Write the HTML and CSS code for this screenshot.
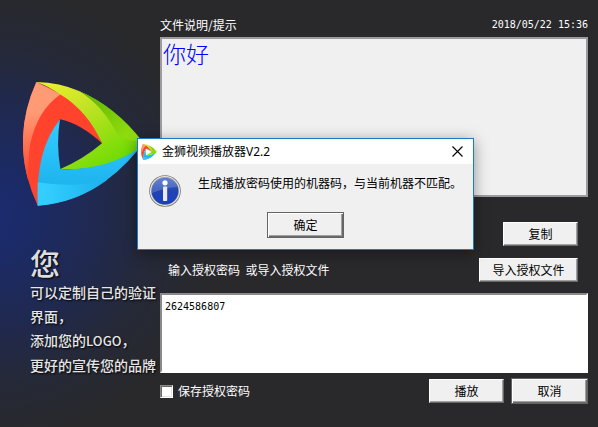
FILE: index.html
```html
<!DOCTYPE html>
<html lang="zh-CN">
<head>
    <meta charset="UTF-8">
    <meta name="viewport" content="width=device-width, initial-scale=1.0">
    <title>金狮视频播放器V2.2</title>
    <link rel="stylesheet" href="styles.css">
</head>
<body>
    <svg class="defs" width="0" height="0" aria-hidden="true">
        <defs>
            <linearGradient id="redLight" x1="0" y1="0" x2="0" y2="1">
                <stop offset="0.3" stop-color="#ff9b74"/>
                <stop offset="1" stop-color="#ff432d"/>
            </linearGradient>
            <linearGradient id="lime" x1="0" y1="0" x2="0.7" y2="1">
                <stop offset="0" stop-color="#eef22c"/>
                <stop offset="0.4" stop-color="#c4e326"/>
                <stop offset="1" stop-color="#6bdb00"/>
            </linearGradient>
            <linearGradient id="green" x1="0" y1="0" x2="0.8" y2="1">
                <stop offset="0" stop-color="#5cb300"/>
                <stop offset="1" stop-color="#94e010"/>
            </linearGradient>
            <linearGradient id="blue" x1="0" y1="0" x2="0" y2="1">
                <stop offset="0" stop-color="#33ccff"/>
                <stop offset="1" stop-color="#17adea"/>
            </linearGradient>
            <linearGradient id="blueLight" x1="0" y1="0" x2="1" y2="0">
                <stop offset="0.1" stop-color="#33ceff"/>
                <stop offset="1" stop-color="#1bb0ec"/>
            </linearGradient>
            <linearGradient id="infoFill" x1="0" y1="0" x2="0" y2="1">
                <stop offset="0" stop-color="#3f66c9"/>
                <stop offset="0.5" stop-color="#2143b0"/>
                <stop offset="1" stop-color="#1b3fc4"/>
            </linearGradient>
            <symbol id="logo" viewBox="69 66 360 372">
                <path fill="#ff432d" d="M109 66 L190 103 Q268 152 306 250 Q240 190 180 178 Q120 260 113 437 Q26 250 109 66Z"/>
                <path fill="url(#redLight)" d="M109 66 L182 103 Q112 150 90 255 Q84 300 85 362 Q43 213 109 66Z"/>
                <path fill="url(#lime)" d="M109 66 Q180 68 237 93 Q345 140 425 248 Q424 262 412 272 Q310 334 181 327 Q250 298 306 250 Q262 152 180 103 Q148 80 109 66Z"/>
                <path fill="url(#green)" d="M237 93 Q345 138 427 244 Q390 245 353 226 Q312 140 237 93Z"/>
                <path fill="url(#blue)" d="M180 178 Q168 250 181 327 Q310 334 418 265 Q290 425 113 437 Q106 270 180 178Z"/>
                <path fill="url(#blueLight)" d="M113 367 Q220 384 322 359 Q228 429 113 437Z"/>
            </symbol>
        </defs>
    </svg>

    <div class="window">
        <aside class="brand">
            <svg class="brand-logo" aria-hidden="true"><use href="#logo"/></svg>
            <div class="brand-title">您</div>
            <p class="brand-text">可以定制自己的验证<br>界面，<br>添加您的<span class="latin">LOGO</span>，<br>更好的宣传您的品牌</p>
        </aside>

        <main class="panel">
            <div class="panel-header">
                <label for="notice">文件说明/提示</label>
                <time class="mono" datetime="2018-05-22T15:36">2018/05/22 15:36</time>
            </div>
            <textarea id="notice" class="notice" readonly>你好</textarea>

            <div class="row row-copy">
                <button type="button" class="btn">复制</button>
            </div>
            <div class="row row-import">
                <label for="password">输入授权密码&nbsp; 或导入授权文件</label>
                <button type="button" class="btn btn-wide">导入授权文件</button>
            </div>
            <textarea id="password" class="password mono">2624586807</textarea>

            <div class="row row-actions">
                <label class="save"><input type="checkbox" class="checkbox">保存授权密码</label>
                <button type="button" class="btn">播放</button>
                <button type="button" class="btn btn-default">取消</button>
            </div>
        </main>
    </div>

    <!-- Message box -->
    <div class="dialog" role="alertdialog" aria-labelledby="dialogTitle" aria-describedby="dialogText">
        <div class="dialog-bar">
            <svg class="dialog-logo" aria-hidden="true"><use href="#logo"/></svg>
            <span id="dialogTitle" class="dialog-title">金狮视频播放器V2.2</span>
            <button type="button" class="dialog-close" aria-label="关闭">
                <svg width="11" height="11" viewBox="0 0 11 11"><path d="M0.5 0.5 L10.5 10.5 M10.5 0.5 L0.5 10.5" stroke="#000" stroke-width="1.1"/></svg>
            </button>
        </div>
        <div class="dialog-body">
            <svg class="dialog-icon" viewBox="0 0 32 32" aria-hidden="true">
                <circle cx="16" cy="16" r="15.8" fill="#777"/>
                <circle cx="16" cy="16" r="15" fill="#e8e8e8"/>
                <circle cx="16" cy="16" r="13.9" fill="#8a8f9c"/>
                <circle cx="16" cy="16" r="13.3" fill="url(#infoFill)"/>
                <path d="M3 18 A13 13 0 0 1 28.5 12 Q18 12 3 18Z" fill="#fff" opacity="0.18"/>
                <circle cx="16" cy="7.8" r="2.6" fill="#fff"/>
                <rect x="14" y="11.5" width="4.2" height="14.5" rx="0.8" fill="#e9e9ee"/>
            </svg>
            <p id="dialogText" class="dialog-text">生成播放密码使用的机器码，与当前机器不匹配。</p>
        </div>
        <div class="dialog-footer">
            <button type="button" class="btn btn-default">确定</button>
        </div>
    </div>
</body>
</html>
```
FILE: styles.css
```css
* {
    box-sizing: border-box;
}

body {
    margin: 0;
    min-height: 100vh;
    font-family: "Noto Sans CJK SC", sans-serif;
    font-size: 12px;
    line-height: 16px;
    color: #fff;
    background: #29292c radial-gradient(circle at -10px 215px, #1b2b6d 0, #1b2b69 35px, #20294f 110px, #252938 165px, #29292c 225px) no-repeat;
}

.defs {
    position: absolute;
}

.mono {
    font-family: "DejaVu Sans Mono", monospace;
    font-size: 10px;
}

.window {
    display: grid;
    grid-template-columns: 160px 1fr;
}

/* Left side */
.brand {
    padding-top: 82px;
    padding-left: 23px;
    white-space: nowrap;
}

.brand-logo {
    display: block;
    width: 120px;
    height: 124px;
}

.brand-title {
    margin-top: 38px;
    padding-left: 7px;
    font-size: 30px;
    font-weight: 500;
    line-height: 36px;
    color: #ddd;
    text-shadow: 1px 1px 2px #000;
}

.brand-text {
    margin: 0;
    padding-left: 7px;
    font-size: 14px;
    font-weight: 500;
    line-height: 24px;
    text-shadow: 1px 1px 2px #000;
    color: #e6e6e6;
}

.latin {
    font-size: 13px;
}

/* Right side */
.panel {
    display: flex;
    flex-direction: column;
    padding: 17px 10px 0 0;
}

.panel-header {
    display: flex;
    justify-content: space-between;
    margin-bottom: 4px;
}

textarea {
    display: block;
    width: 100%;
    resize: none;
    border-radius: 0;
    outline: none;
}

.notice {
    height: 160px;
    padding: 0 1px;
    border: 2px solid #9d9aa0;
    background: #f0f0f0;
    color: #0000ff;
    font-family: "Noto Sans CJK SC", sans-serif;
    font-size: 23px;
    font-weight: 300;
    line-height: 28px;
}

.password {
    height: 80px;
    padding: 4px 3px;
    border: 2px solid;
    border-color: #8a8a8a #fff #fff #8a8a8a;
    background: #fff;
    color: #000;
    line-height: 16px;
}

.row {
    display: flex;
    align-items: center;
}

.row-copy {
    justify-content: flex-end;
    padding: 25px 10px 12px 0;
}

.row-import {
    justify-content: space-between;
    padding: 0 10px 11px 8px;
}

.row-actions {
    gap: 7px;
    padding-top: 5px;
}

.save {
    display: flex;
    align-items: center;
    gap: 5px;
    margin-right: auto;
}

.checkbox {
    appearance: none;
    width: 13px;
    height: 13px;
    margin: 0;
    border: 1px solid;
    border-color: #8a8a8a #fff #fff #8a8a8a;
    background: #fff;
    box-shadow: inset 1px 1px 0 #696969, inset -1px -1px 0 #e3e3e3;
}

.checkbox:checked {
    background: #333;
}

.btn {
    width: 75px;
    height: 24px;
    padding: 0;
    border: 1px solid;
    border-color: #fff #696969 #696969 #fff;
    border-radius: 0;
    background: #f0f0f0;
    box-shadow: inset -1px -1px 0 #a0a0a0;
    font-family: inherit;
    font-size: 12px;
    line-height: 16px;
    color: #000;
}

.btn-wide {
    width: 99px;
}

.btn-default {
    width: 77px;
    height: 26px;
    border-color: #646464;
    box-shadow: inset 1px 1px 0 #fff, inset -1px -1px 0 #696969, inset -2px -2px 0 #a0a0a0;
}

/* Message box */
.dialog {
    position: absolute;
    left: 137px;
    top: 138px;
    border: 1px solid #1979ca;
    background: #f0f0f0;
    color: #000;
    box-shadow: 0 3px 14px rgba(0, 0, 0, 0.4);
}

.dialog-bar {
    display: flex;
    align-items: center;
    height: 25px;
    padding: 0 10px 0 3px;
    background: #fff;
}

.dialog-logo {
    width: 16px;
    height: 16px;
    margin-right: 5px;
}

.dialog-title {
    flex: 1;
    font-family: "Noto Sans", "Noto Sans CJK SC", sans-serif;
}

.dialog-close {
    display: flex;
    padding: 0;
    border: none;
    background: none;
}

.dialog-body {
    display: flex;
    gap: 17px;
    padding: 11px 11px 0;
}

.dialog-icon {
    width: 32px;
    height: 32px;
}

.dialog-text {
    margin: 0;
    white-space: nowrap;
}

.dialog-footer {
    display: flex;
    justify-content: center;
    padding: 5px 0 11px;
}
```
